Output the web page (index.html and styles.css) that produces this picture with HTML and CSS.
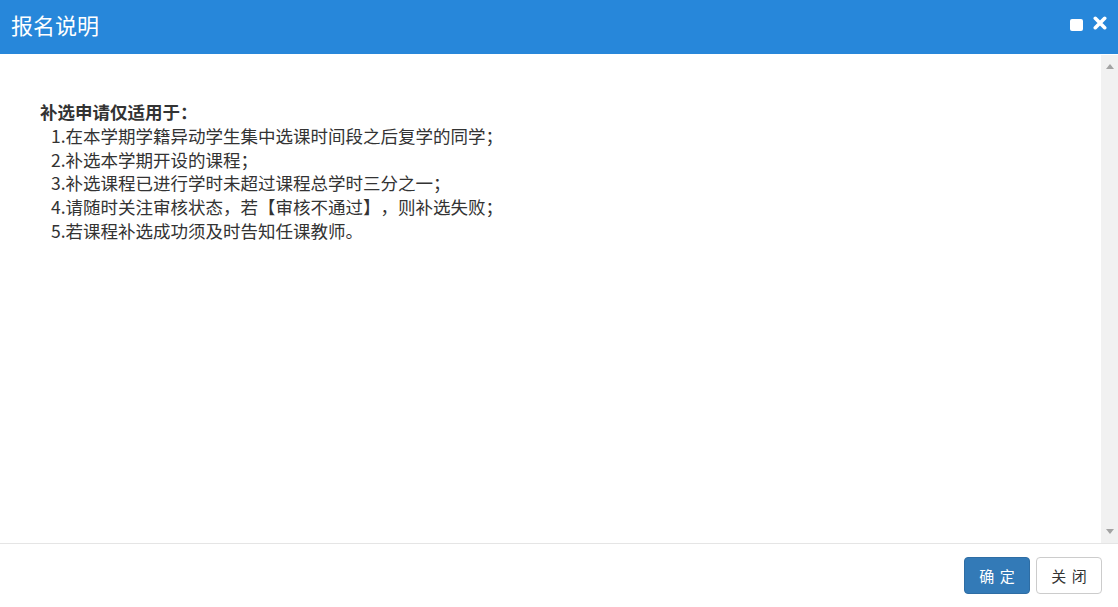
FILE: index.html
```html
<!DOCTYPE html>
<html lang="zh-CN">
<head>
<meta charset="utf-8">
<title>报名说明</title>
<link rel="stylesheet" href="styles.css">
</head>
<body>
<div class="dialog">
  <div class="header">
    <div class="title">报名说明</div>
    <div class="tools">
      <span class="max-icon"></span>
      <svg class="close-icon" viewBox="0 0 14 14" width="14" height="14">
        <path d="M2.3 2.3 L11.7 11.7 M11.7 2.3 L2.3 11.7" stroke="#fff" stroke-width="3.6" stroke-linecap="round" fill="none"/>
      </svg>
    </div>
  </div>
  <div class="body">
    <div class="content">
      <div class="heading">补选申请仅适用于：</div>
      <div class="item">1.在本学期学籍异动学生集中选课时间段之后复学的同学；</div>
      <div class="item">2.补选本学期开设的课程；</div>
      <div class="item">3.补选课程已进行学时未超过课程总学时三分之一；</div>
      <div class="item">4.请随时关注审核状态，若【审核不通过】，则补选失败；</div>
      <div class="item">5.若课程补选成功须及时告知任课教师。</div>
    </div>
    <div class="scrollbar">
      <span class="arrow up"></span>
      <span class="arrow down"></span>
    </div>
  </div>
  <div class="footer">
    <button class="btn primary">确 定</button>
    <button class="btn default">关 闭</button>
  </div>
</div>
</body>
</html>
```
FILE: styles.css
```css
html, body {
  margin: 0;
  padding: 0;
  background: #fff;
}
body {
  font-family: "Microsoft YaHei", "Noto Sans CJK SC", "Liberation Sans", sans-serif;
  color: #333;
  text-spacing-trim: space-all;
}
.dialog {
  width: 1118px;
  height: 607px;
  display: flex;
  flex-direction: column;
}
.header {
  height: 54px;
  background: #2787da;
  display: flex;
  align-items: center;
  justify-content: space-between;
  padding: 0 11px 0 11px;
  flex-shrink: 0;
}
.title {
  color: #fff;
  font-size: 22px;
  line-height: 26px;
  margin-top: -6px;
}
.tools {
  display: flex;
  align-items: center;
  gap: 10px;
  margin-top: -8px;
}
.max-icon {
  display: block;
  width: 13px;
  height: 12px;
  background: #fff;
  border-radius: 2px;
  margin-top: 3px;
}
.close-icon {
  display: block;
}
.body {
  flex: 1;
  display: flex;
  min-height: 0;
  border-bottom: 1px solid #e5e5e5;
  margin-top: 1px;
}
.content {
  flex: 1;
  padding: 45px 0 0 40px;
  font-size: 17.5px;
  line-height: 23.8px;
}
.heading {
  font-weight: bold;
}
.item {
  padding-left: 11px;
}
.scrollbar {
  width: 17px;
  background: #f1f1f1;
  display: flex;
  flex-direction: column;
  justify-content: space-between;
  align-items: center;
  padding: 9px 0 9px 0;
}
.arrow {
  width: 0;
  height: 0;
  border-left: 4.5px solid transparent;
  border-right: 4.5px solid transparent;
}
.arrow.up {
  border-bottom: 5px solid #a3a3a3;
}
.arrow.down {
  border-top: 5px solid #a3a3a3;
}
.footer {
  height: 63px;
  flex-shrink: 0;
  display: flex;
  justify-content: flex-end;
  align-items: flex-start;
  gap: 6px;
  padding: 13px 16px 0 0;
  box-sizing: border-box;
}
.btn {
  width: 66px;
  height: 37px;
  font-family: inherit;
  font-size: 15px;
  letter-spacing: 1px;
  text-indent: 1px;
  border-radius: 4px;
  border: 1px solid;
  cursor: pointer;
  padding: 0;
}
.btn.primary {
  background: #337ab7;
  border-color: #2e6da4;
  color: #fff;
}
.btn.default {
  background: #fff;
  border-color: #ccc;
  color: #333;
}
```
